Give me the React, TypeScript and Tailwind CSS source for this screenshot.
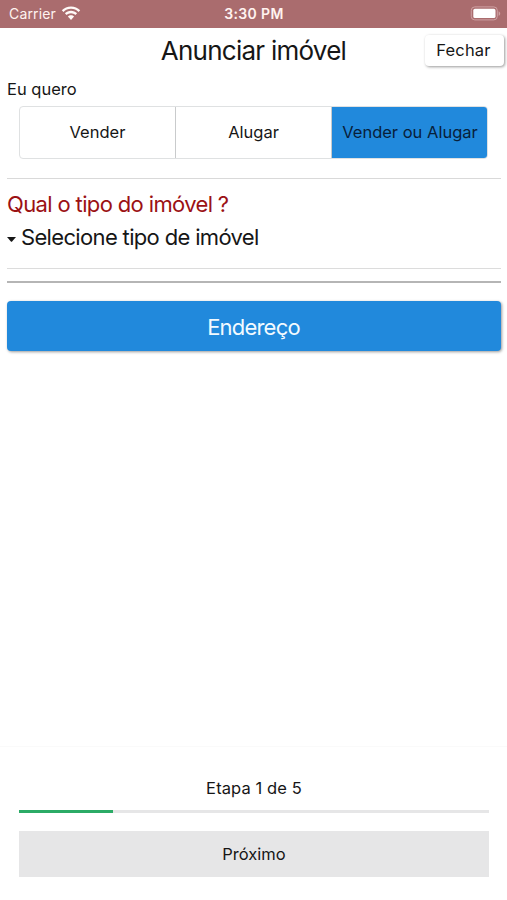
import { useState } from "react";

const purposes = ["Vender", "Alugar", "Vender ou Alugar"];

const WifiIcon = () => (
  <svg width="20" height="15" viewBox="0 0 20 15" fill="#fffaf8">
    <path d="M10 0.4C6.4 0.4 3.2 1.8 0.8 4.2L2.5 6C4.5 4 7.1 2.8 10 2.8s5.500 1.200 7.500 3.200l1.700-1.800C16.800 1.800 13.600 0.400 10 0.400z" />
    <path d="M10 4.800c-2.400 0-4.500 0.900-6.100 2.500l1.700 1.800C6.800 7.900 8.300 7.200 10 7.200s3.200 0.700 4.400 1.900l1.700-1.800C14.500 5.700 12.400 4.800 10 4.800z" />
    <path d="M10 9.200c-1.200 0-2.300 0.500-3.100 1.300L10 13.900l3.100-3.400C12.300 9.700 11.200 9.200 10 9.200z" />
  </svg>
);

const BatteryIcon = () => (
  <svg width="31" height="15" viewBox="0 0 31 15">
    <rect
      x="1.300"
      y="0.9"
      width="26"
      height="13"
      rx="3.5"
      fill="none"
      stroke="#cfa2a3"
      strokeWidth="1"
    />
    <rect x="3.300" y="2.800" width="22.200" height="9.200" rx="1.600" fill="#ffffff" />
    <path d="M28.600 5.200v4.600c1-.4 1.600-1.300 1.600-2.300s-.6-1.900-1.600-2.300z" fill="#cfa2a3" />
  </svg>
);

const StatusBar = () => (
  <div className="grid h-7 grid-cols-3 items-center bg-[#aa6c6e] pr-[6px] pb-[2px] pl-[9px] text-[#fff3f0]">
    <div className="flex items-center gap-[5px]">
      <span className="text-[14px] tracking-[0.15px]">Carrier</span>
      <WifiIcon />
    </div>
    <span className="pr-[2px] text-center text-[14px] font-semibold tracking-[0.350px]">
      3:30 PM
    </span>
    <div className="flex justify-end">
      <BatteryIcon />
    </div>
  </div>
);

const App = () => {
  const [purpose, setPurpose] = useState<string>("Vender ou Alugar");

  return (
    <div className="flex h-[900px] w-[507px] flex-col bg-white font-['Inter',sans-serif] text-[#161616]">
      <StatusBar />

      <header className="grid h-[49px] grid-cols-[1fr_auto_1fr] items-start pr-[3px] pl-[3px]">
        <h1 className="col-start-2 pt-[5px] text-[26px] leading-9 tracking-[-0.750px]">
          Anunciar imóvel
        </h1>
        <button className="mt-[7px] h-[31px] w-[79px] justify-self-end rounded-[4px] bg-white pr-[2px] text-[16.500px] tracking-[0.150px] shadow-[1px_1px_3px_rgba(0,0,0,0.4)]">
          Fechar
        </button>
      </header>

      <main className="flex-1 pr-[6px] pl-[7px]">
        <p className="h-[29px] text-[16.500px] leading-6">Eu quero</p>
        <div className="mr-[13px] ml-[12px] grid h-[53px] grid-cols-[156px_156px_1fr] overflow-hidden rounded-[4px] border border-[#dfe1e2]">
          {purposes.map((item) => (
            <button
              key={item}
              onClick={() => setPurpose(item)}
              className={
                item === purpose
                  ? "-my-px -mr-px bg-[#2189dc] text-[16.500px] whitespace-nowrap text-[#08203a]"
                  : "border-r border-[#c9cbcc] text-[16.500px] whitespace-nowrap last:border-r-0"
              }
            >
              {item}
            </button>
          ))}
        </div>

        <hr className="mt-[19px] border-[#d9d9d9]" />
        <h2 className="mt-[9px] text-[22px] leading-8 tracking-[-0.640px] text-[#9b1114]">
          Qual o tipo do imóvel ?
        </h2>
        <button className="flex h-[34px] items-center gap-[5px] text-[22px] tracking-[-0.660px]">
          <svg className="mt-[4px]" width="9" height="5" viewBox="0 0 9 5">
            <path d="M0 0h9L5.100 4.400q-.6.600-1.200 0z" fill="#161616" />
          </svg>
          Selecione tipo de imóvel
        </button>
        <hr className="mt-[14px] border-[#dcdcdc]" />
        <hr className="mt-[12px] border-t-2 border-[#b5b5b5]" />

        <button className="mt-[18px] h-[50px] w-full rounded-[4px] bg-[#2189dc] pt-[2px] pr-[1px] text-[22px] tracking-[-0.800px] text-[#f2faff] shadow-[1px_1px_3px_rgba(0,0,0,0.4)]">
          Endereço
        </button>
      </main>

      <footer className="h-[154px] border-t border-[#fafafa] pr-[18px] pl-[19px] pt-[29px]">
        <p className="text-center text-[16.500px] leading-6 tracking-[0.100px]">
          Etapa 1 de 5
        </p>
        <div className="mt-[10px] h-[3px] bg-[#e6e6e7]">
          <div className="h-full w-1/5 bg-[#2bab66]" />
        </div>
        <button className="mt-[18px] h-[46px] w-full bg-[#e6e6e7] text-[16.500px]">
          Próximo
        </button>
      </footer>
    </div>
  );
};

export default App;
